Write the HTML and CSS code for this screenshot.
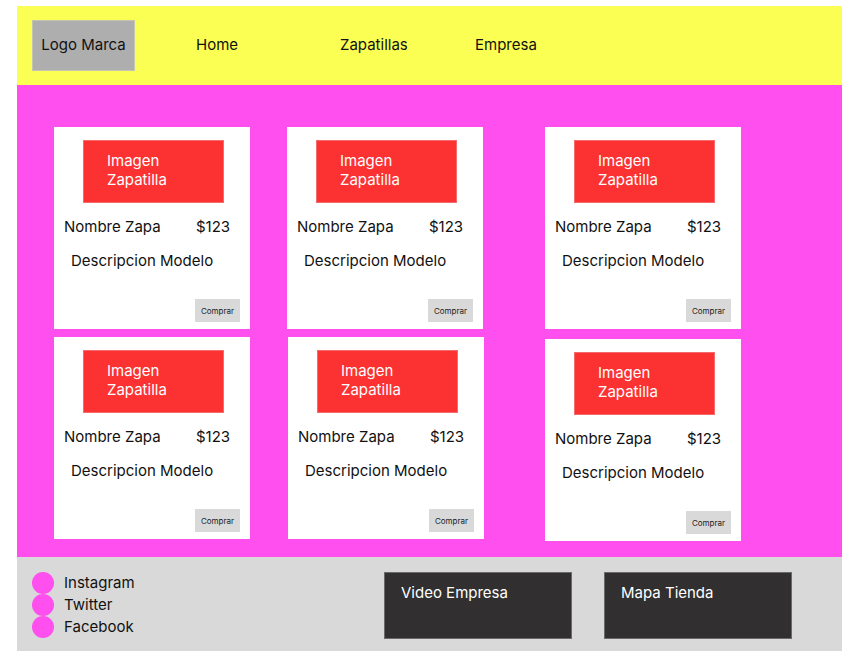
FILE: index.html
```html
<!DOCTYPE html>
<html lang="es">
<head>
  <meta charset="UTF-8" />
  <meta name="viewport" content="width=device-width, initial-scale=1.0"/>
  <title>Tienda de Zapatillas</title>
  <link rel="stylesheet" href="styles.css">
</head>
<body>
  <div class="page">
    <header class="topbar">
      <div class="logo">Logo Marca</div>
      <nav class="nav">
        <a href="#">Home</a>
        <a href="#">Zapatillas</a>
        <a href="#">Empresa</a>
      </nav>
    </header>

    <main class="catalog">
      <div class="grid">
        <div class="card">
          <div class="card-img">Imagen<br>Zapatilla</div>
          <div class="card-row"><span class="name">Nombre Zapa</span><span>$123</span></div>
          <p class="desc">Descripcion Modelo</p>
          <button class="buy">Comprar</button>
        </div>
        <div class="card">
          <div class="card-img">Imagen<br>Zapatilla</div>
          <div class="card-row"><span class="name">Nombre Zapa</span><span>$123</span></div>
          <p class="desc">Descripcion Modelo</p>
          <button class="buy">Comprar</button>
        </div>
        <div class="card">
          <div class="card-img">Imagen<br>Zapatilla</div>
          <div class="card-row"><span class="name">Nombre Zapa</span><span>$123</span></div>
          <p class="desc">Descripcion Modelo</p>
          <button class="buy">Comprar</button>
        </div>
        <div class="card">
          <div class="card-img">Imagen<br>Zapatilla</div>
          <div class="card-row"><span class="name">Nombre Zapa</span><span>$123</span></div>
          <p class="desc">Descripcion Modelo</p>
          <button class="buy">Comprar</button>
        </div>
        <div class="card">
          <div class="card-img">Imagen<br>Zapatilla</div>
          <div class="card-row"><span class="name">Nombre Zapa</span><span>$123</span></div>
          <p class="desc">Descripcion Modelo</p>
          <button class="buy">Comprar</button>
        </div>
        <div class="card">
          <div class="card-img">Imagen<br>Zapatilla</div>
          <div class="card-row"><span class="name">Nombre Zapa</span><span>$123</span></div>
          <p class="desc">Descripcion Modelo</p>
          <button class="buy">Comprar</button>
        </div>
      </div>
    </main>

    <footer class="footer">
      <ul class="social">
        <li><span class="dot"></span>Instagram</li>
        <li><span class="dot"></span>Twitter</li>
        <li><span class="dot"></span>Facebook</li>
      </ul>
      <div class="media">Video Empresa</div>
      <div class="media">Mapa Tienda</div>
    </footer>
  </div>
</body>
</html>
```

FILE: styles.css
```css
:root {
  --yellow: #fbff54;
  --pink: #ff4fee;
  --red: #fc3131;
  --grey: #d9d9d9;
  --dark: #312f30;
}

body {
  margin: 0;
  background: white;
  font-family: 'Inter', 'Liberation Sans', sans-serif;
  font-size: 15px;
  color: #111;
}

.page {
  width: 825px;
  margin: 6px 0 0 17px;
}

/* Header */
.topbar {
  height: 79px;
  background: var(--yellow);
  display: flex;
  align-items: center;
  padding-left: 15px;
}

.logo {
  width: 103px;
  height: 51px;
  box-sizing: border-box;
  background: #aeaeae;
  border: 1px solid #c4c4b0;
  display: flex;
  align-items: center;
  justify-content: center;
  padding-bottom: 3px;
  color: #111;
}

.nav {
  display: grid;
  grid-template-columns: 144px 135px auto;
  margin: 0 0 3px 61px;
}

.nav a {
  color: #111;
  text-decoration: none;
}

/* Catalogo */
.catalog {
  height: 472px;
  background: var(--pink);
  padding: 42px 0 0 37px;
  box-sizing: border-box;
}

.grid {
  display: grid;
  grid-template-columns: 233px 258px 196px;
  row-gap: 8px;
}

.card {
  width: 196px;
  height: 202px;
  background: white;
  display: flex;
  flex-direction: column;
  padding-top: 13px;
  box-sizing: border-box;
}

.card:nth-child(5) { margin-left: 1px; }
.card:nth-child(6) { margin-top: 2px; }

.card-img {
  width: 141px;
  height: 63px;
  margin-left: 29px;
  box-sizing: border-box;
  padding: 10px 0 0 23px;
  background: var(--red);
  border: 1px solid #f56a6a;
  color: white;
  line-height: 19px;
}

.card-row {
  display: flex;
  margin-top: 14px;
  padding-left: 10px;
  line-height: 20px;
}

.card-row .name {
  width: 132px;
}

.desc {
  margin: 14px 0 0;
  padding-left: 17px;
  line-height: 20px;
}

.buy {
  margin: auto 10px 7px 0;
  align-self: flex-end;
  width: 45px;
  height: 23px;
  padding: 0;
  border: none;
  background: var(--grey);
  font-family: inherit;
  font-size: 8px;
  color: #222;
}

/* Footer */
.footer {
  height: 94px;
  background: var(--grey);
  display: flex;
  align-items: flex-start;
  padding: 15px 0 0 15px;
  box-sizing: border-box;
}

.social {
  list-style: none;
  margin: 0;
  padding: 0;
  width: 352px;
}

.social li {
  display: flex;
  align-items: center;
  height: 22.5px;
  margin-top: -0.5px;
}

.dot {
  width: 22px;
  height: 22px;
  border-radius: 50%;
  background: var(--pink);
  margin-right: 10px;
}

.media {
  width: 188px;
  height: 67px;
  box-sizing: border-box;
  background: var(--dark);
  border: 1px solid #6a6a6a;
  color: white;
  padding: 10px 0 0 16px;
  line-height: 20px;
}

.media + .media {
  margin-left: 32px;
}
```
